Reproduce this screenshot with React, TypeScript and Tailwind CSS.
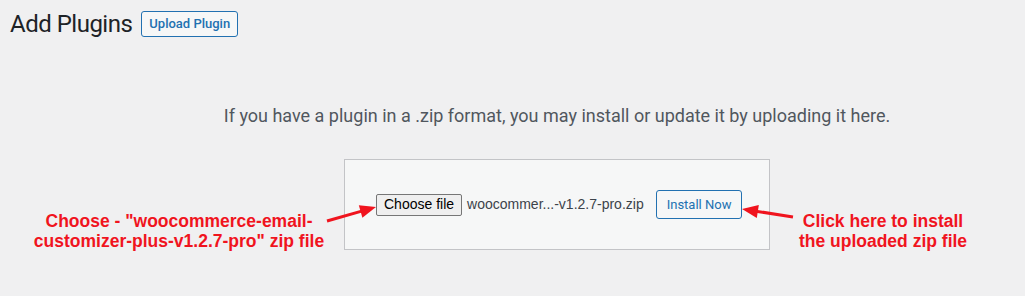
const roboto = { fontFamily: "Roboto, 'Liberation Sans', sans-serif" };
const arial = { fontFamily: "'Liberation Sans', Arial, sans-serif" };

function Arrow({ x1, y1, x2, y2 }: { x1: number; y1: number; x2: number; y2: number }) {
  const a = Math.atan2(y2 - y1, x2 - x1);
  const len = 16;
  const w = 6.5;
  const bx = x2 - len * Math.cos(a);
  const by = y2 - len * Math.sin(a);
  const px = -Math.sin(a) * w;
  const py = Math.cos(a) * w;
  return (
    <g>
      <line x1={x1} y1={y1} x2={bx + 2 * Math.cos(a)} y2={by + 2 * Math.sin(a)} stroke="#f0141e" strokeWidth={3} />
      <polygon points={`${x2},${y2} ${bx + px},${by + py} ${bx - px},${by - py}`} fill="#f0141e" />
    </g>
  );
}

export default function App() {
  return (
    <div className="relative h-[296px] w-[1025px] overflow-hidden bg-[#f0f0f1]" style={roboto}>
      <div className="flex items-center gap-[9px] pl-[10px] pt-[9px]">
        <h1 className="text-[24px] leading-[30px] font-normal text-[#1d2327] tracking-[-0.5px]">Add Plugins</h1>
        <button className="h-[26px] rounded-[3px] border border-[#2271b1] bg-[#f6f7f7] px-[7px] text-[13px] font-medium text-[#2271b1]">
          Upload Plugin
        </button>
      </div>

      <div className="flex flex-col items-center pl-[89px] pt-[65px]">
        <p className="text-[18px] leading-[24px] text-[#50575e]">
          If you have a plugin in a .zip format, you may install or update it by uploading it here.
        </p>
        <div className="mt-[31px] flex h-[91px] w-[426px] items-center border border-[#c3c4c7] bg-[#f6f7f7] pl-[31px]">
          <div className="flex items-center" style={arial}>
            <span className="flex h-[22px] items-center rounded-[2px] border border-[#767676] bg-[#efefef] px-[7px] text-[14px] text-black">
              Choose file
            </span>
            <span className="ml-[5px] text-[14px] text-[#3c434a]">woocommer...-v1.2.7-pro.zip</span>
          </div>
          <button className="ml-[12px] h-[29px] rounded-[3px] border border-[#2271b1] bg-[#f6f7f7] px-[10px] text-[13px] text-[#2271b1]">
            Install Now
          </button>
        </div>
      </div>

      <div
        className="absolute left-[26px] top-[211px] w-[306px] text-center text-[17.5px] font-bold leading-[20px] text-[#f0141e]"
        style={arial}
      >
        Choose - "woocommerce-email-
        <br />
        customizer-plus-v1.2.7-pro" zip file
      </div>
      <div
        className="absolute left-[786px] top-[211px] w-[194px] text-center text-[17.5px] font-bold leading-[20px] text-[#f0141e]"
        style={arial}
      >
        Click here to install
        <br />
        the uploaded zip file
      </div>

      <svg className="absolute left-0 top-0" width={1025} height={296}>
        <Arrow x1={327} y1={221} x2={376} y2={207} />
        <Arrow x1={793} y1={217} x2={742} y2={209} />
      </svg>
    </div>
  );
}
